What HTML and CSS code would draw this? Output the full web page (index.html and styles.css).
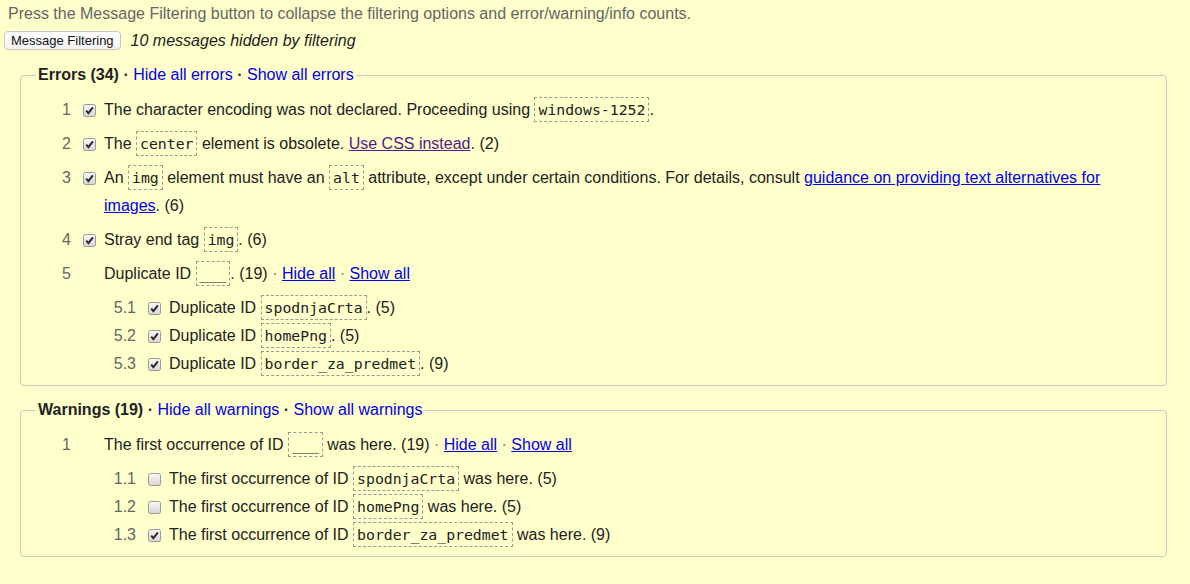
FILE: index.html
```html
<!DOCTYPE html>
<html lang="en">
<head>
<meta charset="utf-8">
<title>Message Filtering</title>
<link rel="stylesheet" href="styles.css">
</head>
<body>
<svg class="defs" width="0" height="0" aria-hidden="true">
  <defs>
    <linearGradient id="cbg" x1="0" y1="0" x2="0" y2="1">
      <stop offset="0" stop-color="#fafafa"/>
      <stop offset="1" stop-color="#d6d6d6"/>
    </linearGradient>
  </defs>
</svg>

<p class="intro">Press the Message Filtering button to collapse the filtering options and error/warning/info counts.</p>
<div class="controls">
  <button class="filter-btn" type="button">Message Filtering</button>
  <span class="hidden-count">10 messages hidden by filtering</span>
</div>

<fieldset class="group">
  <legend><strong>Errors (34)</strong> <span class="dot">·</span> <a href="#">Hide all errors</a> <span class="dot">·</span> <a href="#">Show all errors</a></legend>
  <ol class="items">
    <li>
      <div class="row">
        <span class="num">1</span>
        <span class="cb"><svg width="13" height="13" viewBox="0 0 13 13"><rect x="0.5" y="0.5" width="12" height="12" rx="2" fill="url(#cbg)" stroke="#999"/><path d="M3.2 6.6 L5.4 9.1 L9.9 3.4" fill="none" stroke="#2a2a2a" stroke-width="2"/></svg></span>
        <div class="msg">The character encoding was not declared. Proceeding using <code>windows-1252</code>.</div>
      </div>
    </li>
    <li>
      <div class="row">
        <span class="num">2</span>
        <span class="cb"><svg width="13" height="13" viewBox="0 0 13 13"><rect x="0.5" y="0.5" width="12" height="12" rx="2" fill="url(#cbg)" stroke="#999"/><path d="M3.2 6.6 L5.4 9.1 L9.9 3.4" fill="none" stroke="#2a2a2a" stroke-width="2"/></svg></span>
        <div class="msg">The <code>center</code> element is obsolete. <a class="visited" href="#">Use CSS instead</a>. (2)</div>
      </div>
    </li>
    <li>
      <div class="row">
        <span class="num">3</span>
        <span class="cb"><svg width="13" height="13" viewBox="0 0 13 13"><rect x="0.5" y="0.5" width="12" height="12" rx="2" fill="url(#cbg)" stroke="#999"/><path d="M3.2 6.6 L5.4 9.1 L9.9 3.4" fill="none" stroke="#2a2a2a" stroke-width="2"/></svg></span>
        <div class="msg">An <code>img</code> element must have an <code>alt</code> attribute, except under certain conditions. For details, consult <a class="ul" href="#">guidance on providing text alternatives for images</a>. (6)</div>
      </div>
    </li>
    <li>
      <div class="row">
        <span class="num">4</span>
        <span class="cb"><svg width="13" height="13" viewBox="0 0 13 13"><rect x="0.5" y="0.5" width="12" height="12" rx="2" fill="url(#cbg)" stroke="#999"/><path d="M3.2 6.6 L5.4 9.1 L9.9 3.4" fill="none" stroke="#2a2a2a" stroke-width="2"/></svg></span>
        <div class="msg">Stray end tag <code>img</code>. (6)</div>
      </div>
    </li>
    <li>
      <div class="row">
        <span class="num">5</span>
        <span class="cb"></span>
        <div class="msg">Duplicate ID <code>___</code>. (19) <span class="sep">·</span> <a class="ul" href="#">Hide all</a> <span class="sep">·</span> <a class="ul" href="#">Show all</a></div>
      </div>
      <ol class="items sub">
        <li>
          <div class="row">
            <span class="num">5.1</span>
            <span class="cb"><svg width="13" height="13" viewBox="0 0 13 13"><rect x="0.5" y="0.5" width="12" height="12" rx="2" fill="url(#cbg)" stroke="#999"/><path d="M3.2 6.6 L5.4 9.1 L9.9 3.4" fill="none" stroke="#2a2a2a" stroke-width="2"/></svg></span>
            <div class="msg">Duplicate ID <code>spodnjaCrta</code>. (5)</div>
          </div>
        </li>
        <li>
          <div class="row">
            <span class="num">5.2</span>
            <span class="cb"><svg width="13" height="13" viewBox="0 0 13 13"><rect x="0.5" y="0.5" width="12" height="12" rx="2" fill="url(#cbg)" stroke="#999"/><path d="M3.2 6.6 L5.4 9.1 L9.9 3.4" fill="none" stroke="#2a2a2a" stroke-width="2"/></svg></span>
            <div class="msg">Duplicate ID <code>homePng</code>. (5)</div>
          </div>
        </li>
        <li>
          <div class="row">
            <span class="num">5.3</span>
            <span class="cb"><svg width="13" height="13" viewBox="0 0 13 13"><rect x="0.5" y="0.5" width="12" height="12" rx="2" fill="url(#cbg)" stroke="#999"/><path d="M3.2 6.6 L5.4 9.1 L9.9 3.4" fill="none" stroke="#2a2a2a" stroke-width="2"/></svg></span>
            <div class="msg">Duplicate ID <code>border_za_predmet</code>. (9)</div>
          </div>
        </li>
      </ol>
    </li>
  </ol>
</fieldset>

<fieldset class="group">
  <legend><strong>Warnings (19)</strong> <span class="dot">·</span> <a href="#">Hide all warnings</a> <span class="dot">·</span> <a href="#">Show all warnings</a></legend>
  <ol class="items">
    <li>
      <div class="row">
        <span class="num">1</span>
        <span class="cb"></span>
        <div class="msg">The first occurrence of ID <code>___</code> was here. (19) <span class="sep">·</span> <a class="ul" href="#">Hide all</a> <span class="sep">·</span> <a class="ul" href="#">Show all</a></div>
      </div>
      <ol class="items sub">
        <li>
          <div class="row">
            <span class="num">1.1</span>
            <span class="cb"><svg width="13" height="13" viewBox="0 0 13 13"><rect x="0.5" y="0.5" width="12" height="12" rx="2" fill="url(#cbg)" stroke="#999"/></svg></span>
            <div class="msg">The first occurrence of ID <code>spodnjaCrta</code> was here. (5)</div>
          </div>
        </li>
        <li>
          <div class="row">
            <span class="num">1.2</span>
            <span class="cb"><svg width="13" height="13" viewBox="0 0 13 13"><rect x="0.5" y="0.5" width="12" height="12" rx="2" fill="url(#cbg)" stroke="#999"/></svg></span>
            <div class="msg">The first occurrence of ID <code>homePng</code> was here. (5)</div>
          </div>
        </li>
        <li>
          <div class="row">
            <span class="num">1.3</span>
            <span class="cb"><svg width="13" height="13" viewBox="0 0 13 13"><rect x="0.5" y="0.5" width="12" height="12" rx="2" fill="url(#cbg)" stroke="#999"/><path d="M3.2 6.6 L5.4 9.1 L9.9 3.4" fill="none" stroke="#2a2a2a" stroke-width="2"/></svg></span>
            <div class="msg">The first occurrence of ID <code>border_za_predmet</code> was here. (9)</div>
          </div>
        </li>
      </ol>
    </li>
  </ol>
</fieldset>
</body>
</html>
```
FILE: styles.css
```css
html, body {
  margin: 0;
  padding: 0;
  background: #ffffcc;
}

body {
  font-family: "Liberation Sans", Arial, sans-serif;
  font-size: 16px;
  color: #222;
}

.defs {
  position: absolute;
  width: 0;
  height: 0;
}

.intro {
  margin: 0;
  padding: 5px 8px 0;
  line-height: 18px;
  color: #666;
}

.controls {
  display: flex;
  align-items: center;
  gap: 10px;
  margin-top: 8px;
  padding-left: 4px;
  height: 19px;
}

.filter-btn {
  font-family: "Liberation Sans", Arial, sans-serif;
  font-size: 13px;
  line-height: 15px;
  height: 19px;
  padding: 1px 6px;
  border: 1px solid #c4c4c4;
  border-radius: 4px;
  background: linear-gradient(#ffffff, #f4f4f4);
  color: #111;
}

.hidden-count {
  font-style: italic;
  line-height: 19px;
}

.group {
  margin: 16px 23px 0 20px;
  padding: 12px 15px 7px 15px;
  border: 1px solid #c8c8c8;
  border-radius: 4px;
  min-width: 0;
}

.group + .group {
  margin-top: 15px;
}

.group legend {
  padding: 0 2px;
  line-height: 18px;
  color: #222;
}

.group legend strong {
  font-weight: bold;
}

.dot {
  font-weight: bold;
  color: #333;
}

a {
  color: #0000ee;
  text-decoration: none;
}

a.ul {
  text-decoration: underline;
}

a.visited {
  color: #551a8b;
  text-decoration: underline;
}

.sep {
  color: #777;
}

.items {
  list-style: none;
  margin: 0;
  padding: 0;
}

.items > li + li {
  margin-top: 6px;
}

.items.sub {
  margin: 6px 0 0 65px;
}

.items.sub > li + li {
  margin-top: 0;
}

.row {
  display: flex;
  align-items: flex-start;
  line-height: 28px;
}

.num {
  flex: 0 0 35px;
  text-align: right;
  color: #666;
}

.cb {
  flex: 0 0 13px;
  height: 28px;
  margin: 0 8px 0 12px;
  display: flex;
  align-items: center;
}

.cb svg {
  display: block;
}

.msg {
  flex: 1;
  min-width: 0;
}

code {
  font-family: "DejaVu Sans Mono", monospace;
  font-size: 14.8px;
  line-height: 17px;
  padding: 3px 3px;
  border: 1px dashed #999;
  color: #222;
}
```
